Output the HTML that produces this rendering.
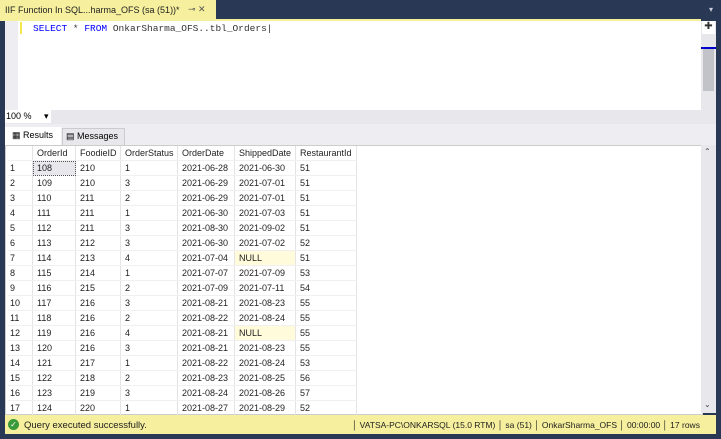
<!DOCTYPE html><html><head><style>
body{margin:0;width:721px;height:439px;background:#293955;font-family:"Liberation Sans",sans-serif;font-size:9px;position:relative;overflow:hidden}
.a{position:absolute}
table{border-collapse:collapse;position:absolute;left:8px;top:146px}
td{height:14px;padding:0 0 0 4px;border-right:1px solid #e4e4e4;border-bottom:1px solid #f0f0f0;color:#1e1e1e;white-space:nowrap;line-height:14px}
tr td:first-child{padding-left:2px}
.n{background:#fffbdb}
</style></head><body>
<div class="a" style="left:0;top:0;width:216px;height:19px;background:#f5ef9e;border-top:2px solid #f5ef9e"></div>
<div class="a" style="left:5px;top:5px;font-size:9px;color:#1e1e1e;white-space:nowrap">IIF Function In SQL...harma_OFS (sa (51))*</div>
<div class="a" style="left:188px;top:4px;font-size:9px;color:#555">⊸ ✕</div>
<div class="a" style="left:709px;top:5px;color:#ccd;font-size:8px">▾</div>
<div class="a" style="left:5px;top:19px;width:696px;height:2px;background:#f5ef9e"></div>
<div class="a" style="left:5px;top:21px;width:696px;height:89px;background:#fff"></div>
<div class="a" style="left:5px;top:21px;width:13px;height:89px;background:#eeeef2"></div>
<div class="a" style="left:20px;top:22px;width:2px;height:12px;background:#f5e84a"></div>
<div class="a" style="left:33px;top:23px;font-family:'Liberation Mono',monospace;font-size:9.5px;color:#333"><span style="color:#0000ff">SELECT</span> * <span style="color:#0000ff">FROM</span> OnkarSharma_OFS..tbl_Orders|</div>
<div class="a" style="left:701px;top:21px;width:15px;height:89px;background:#e8e8ec"></div>
<div class="a" style="left:702px;top:21px;width:13px;height:13px;background:#fff;text-align:center;color:#333;font-size:10px">✚</div>
<div class="a" style="left:701px;top:47px;width:15px;height:2px;background:#00c"></div>
<div class="a" style="left:703px;top:49px;width:11px;height:42px;background:#c2c3c9"></div>
<div class="a" style="left:5px;top:110px;width:711px;height:14px;background:#e8e8ec"></div>
<div class="a" style="left:5px;top:110px;width:46px;height:13px;background:#fff"></div>
<div class="a" style="left:6px;top:111px;font-size:9px">100 % &nbsp;&nbsp;&nbsp;&nbsp;▾</div>
<div class="a" style="left:5px;top:124px;width:711px;height:21px;background:#eeeef2"></div>
<div class="a" style="left:5px;top:127px;width:56px;height:18px;background:#fff"></div>
<div class="a" style="left:12px;top:130px;font-size:9px">▦ Results</div>
<div class="a" style="left:62px;top:128px;width:61px;height:16px;background:#e8e8ec;border:1px solid #ccc"></div>
<div class="a" style="left:66px;top:131px;font-size:9px">▤ Messages</div>
<div class="a" style="left:5px;top:145px;width:696px;height:268px;background:#fff;border:1px solid #ccc"></div>
<div class="a" style="left:701px;top:145px;width:15px;height:268px;background:#e8e8ec"></div>
<div class="a" style="left:704px;top:147px;font-size:8px;color:#444">⌃</div>
<div class="a" style="left:704px;top:400px;font-size:8px;color:#444">⌄</div>
<table>
<tr><td style="width:22px"></td><td style="width:38px">OrderId</td><td style="width:40px">FoodieID</td><td style="width:52px">OrderStatus</td><td style="width:52px">OrderDate</td><td style="width:56px">ShippedDate</td><td style="width:56px">RestaurantId</td></tr>
<tr><td>1</td><td style="background:#e8e8ec;outline:1px dotted #555;outline-offset:-1px">108</td><td>210</td><td>1</td><td>2021-06-28</td><td>2021-06-30</td><td>51</td></tr>
<tr><td>2</td><td>109</td><td>210</td><td>3</td><td>2021-06-29</td><td>2021-07-01</td><td>51</td></tr>
<tr><td>3</td><td>110</td><td>211</td><td>2</td><td>2021-06-29</td><td>2021-07-01</td><td>51</td></tr>
<tr><td>4</td><td>111</td><td>211</td><td>1</td><td>2021-06-30</td><td>2021-07-03</td><td>51</td></tr>
<tr><td>5</td><td>112</td><td>211</td><td>3</td><td>2021-08-30</td><td>2021-09-02</td><td>51</td></tr>
<tr><td>6</td><td>113</td><td>212</td><td>3</td><td>2021-06-30</td><td>2021-07-02</td><td>52</td></tr>
<tr><td>7</td><td>114</td><td>213</td><td>4</td><td>2021-07-04</td><td class="n">NULL</td><td>51</td></tr>
<tr><td>8</td><td>115</td><td>214</td><td>1</td><td>2021-07-07</td><td>2021-07-09</td><td>53</td></tr>
<tr><td>9</td><td>116</td><td>215</td><td>2</td><td>2021-07-09</td><td>2021-07-11</td><td>54</td></tr>
<tr><td>10</td><td>117</td><td>216</td><td>3</td><td>2021-08-21</td><td>2021-08-23</td><td>55</td></tr>
<tr><td>11</td><td>118</td><td>216</td><td>2</td><td>2021-08-22</td><td>2021-08-24</td><td>55</td></tr>
<tr><td>12</td><td>119</td><td>216</td><td>4</td><td>2021-08-21</td><td class="n">NULL</td><td>55</td></tr>
<tr><td>13</td><td>120</td><td>216</td><td>3</td><td>2021-08-21</td><td>2021-08-23</td><td>55</td></tr>
<tr><td>14</td><td>121</td><td>217</td><td>1</td><td>2021-08-22</td><td>2021-08-24</td><td>53</td></tr>
<tr><td>15</td><td>122</td><td>218</td><td>2</td><td>2021-08-23</td><td>2021-08-25</td><td>56</td></tr>
<tr><td>16</td><td>123</td><td>219</td><td>3</td><td>2021-08-24</td><td>2021-08-26</td><td>57</td></tr>
<tr><td>17</td><td>124</td><td>220</td><td>1</td><td>2021-08-27</td><td>2021-08-29</td><td>52</td></tr>
</table>
<div class="a" style="left:5px;top:415px;width:711px;height:19px;background:#f5ef9e"></div>
<div class="a" style="left:8px;top:419px;width:11px;height:11px;border-radius:50%;background:#3a9a3a;color:#fff;font-size:8px;text-align:center;line-height:11px">✓</div>
<div class="a" style="left:24px;top:420px;font-size:9.5px;color:#1e1e1e">Query executed successfully.</div>
<div class="a" style="left:352px;top:420px;font-size:8.5px;color:#1e1e1e;white-space:nowrap">│ VATSA-PC\ONKARSQL (15.0 RTM) │ sa (51) │ OnkarSharma_OFS │ 00:00:00 │ 17 rows</div>
</body></html>
